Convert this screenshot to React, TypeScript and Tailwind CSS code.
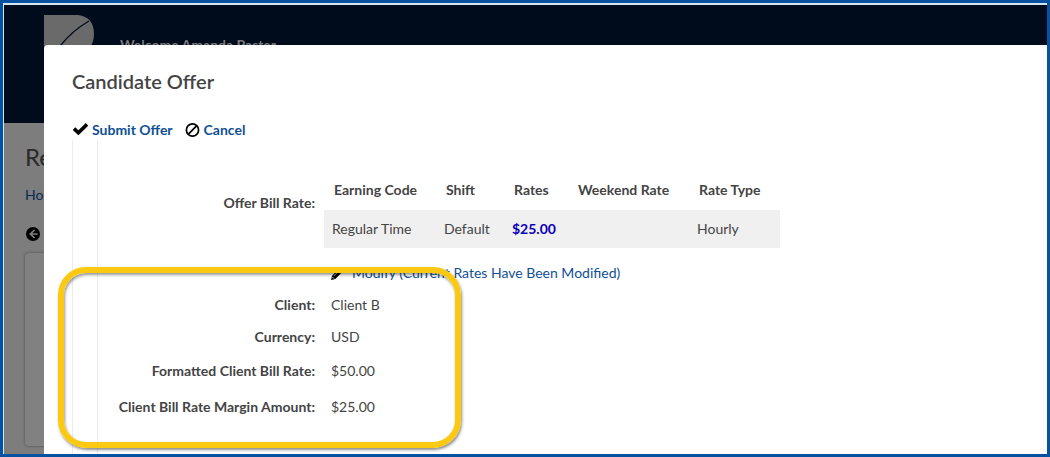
import React from "react";

type Rate = { code: string; shift: string; rate: string; weekend: string; type: string };
type Detail = { label: string; value: string; height: string };

const rates: Rate[] = [
  { code: "Regular Time", shift: "Default", rate: "$25.00", weekend: "", type: "Hourly" },
];

const details: Detail[] = [
  { label: "Client:", value: "Client B", height: "h-8" },
  { label: "Currency:", value: "USD", height: "h-8" },
  { label: "Formatted Client Bill Rate:", value: "$50.00", height: "h-9" },
  { label: "Client Bill Rate Margin Amount:", value: "$25.00", height: "h-9" },
];

function CheckIcon() {
  return (
    <svg viewBox="0 0 16 14" className="h-[14px] w-4" aria-hidden="true">
      <path d="M2 5.6 6.4 9.8 15 1.4" fill="none" stroke="#000" strokeWidth="3.6" />
    </svg>
  );
}

function BanIcon() {
  return (
    <svg viewBox="0 0 15 15" className="h-[15px] w-[15px]" fill="none" stroke="#000" strokeWidth="1.7" aria-hidden="true">
      <circle cx="7.5" cy="7" r="6.1" />
      <path d="M3.2 11.3 11.8 2.7" />
    </svg>
  );
}

function PencilIcon() {
  return (
    <svg viewBox="0 0 12 12" className="h-[13px] w-[13px]" aria-hidden="true">
      <path d="M0 12 1 8 7.8 1.2Q9 0 10.2 1.2L10.8 1.8Q12 3 10.8 4.2L4 11Z" />
      <path d="M2.6 8.2 8 2.8M1.2 9.2 2.8 10.8" stroke="#fff" strokeWidth=".7" />
    </svg>
  );
}

function BackIcon() {
  return (
    <svg viewBox="0 0 14 14" className="h-[14px] w-[14px]" aria-hidden="true">
      <circle cx="7" cy="7" r="7" />
      <path d="M8.6 3 4.4 7l4.2 4M5 7H11.6" fill="none" stroke="#7d7d7d" strokeWidth="1.7" />
    </svg>
  );
}

function Logo() {
  return (
    <svg viewBox="0 0 50 60" className="h-[60px] w-[50px]" aria-hidden="true">
      <path d="M0 0H34Q50 2 50 19Q50 36 30 45L0 60Z" fill="#6a6a6a" />
      <path d="M45 6Q28 16 17 30L10 42" fill="none" stroke="#000c1e" strokeWidth="1.3" />
    </svg>
  );
}

function Backdrop() {
  return (
    <div className="col-start-1 row-start-1 flex min-w-0 flex-col bg-[#7d7d7d]">
      <header className="flex h-[118px] items-start gap-[26px] bg-[#000c1c] pt-[10px] pl-10">
        <Logo />
        <p className="pt-5 text-sm font-bold text-[#7a7a7a]">Welcome Amanda Paster</p>
      </header>
      <div className="flex flex-1 flex-col items-start pt-5 pb-2 pl-[21px]">
        <h1 className="text-2xl leading-7 text-[#292929]">Re</h1>
        <a href="#home" className="mt-3 text-sm leading-6 text-[#0b2a52]">Home</a>
        <button type="button" aria-label="Back" className="mt-5 ml-px">
          <BackIcon />
        </button>
        <div className="mt-3 w-full flex-1 rounded-sm bg-[#818181] shadow-[0_0_3px_rgba(0,0,0,0.4)]" />
      </div>
    </div>
  );
}

function RateTable() {
  return (
    <table className="w-[456px] table-fixed text-left">
      <colgroup>
        <col className="w-28" />
        <col className="w-[68px]" />
        <col className="w-16" />
        <col className="w-[121px]" />
        <col />
      </colgroup>
      <thead>
        <tr className="h-10">
          {["Earning Code", "Shift", "Rates", "Weekend Rate", "Rate Type"].map((h) => (
            <th key={h} scope="col" className="pl-[10px] font-bold whitespace-nowrap">{h}</th>
          ))}
        </tr>
      </thead>
      <tbody>
        {rates.map((r) => (
          <tr key={r.code} className="h-[38px] bg-[#f0f0f0]">
            <td className="pl-2">{r.code}</td>
            <td className="pl-2">{r.shift}</td>
            <td className="pl-2 font-bold text-[#0a00b8]">{r.rate}</td>
            <td className="pl-2">{r.weekend}</td>
            <td className="pl-2">{r.type}</td>
          </tr>
        ))}
      </tbody>
    </table>
  );
}

function OfferDialog() {
  return (
    <section
      role="dialog"
      aria-labelledby="offer-title"
      className="relative col-start-1 row-start-1 mt-10 ml-10 flex min-w-0 flex-col rounded-tl-sm bg-white pt-6 pl-7"
    >
      <h2 id="offer-title" className="text-xl leading-6 font-semibold">Candidate Offer</h2>
      <div className="mt-[27px] flex h-5 items-center gap-3 font-bold text-[#0f4f94]">
        <button type="button" className="flex items-center gap-1">
          <CheckIcon />
          Submit Offer
        </button>
        <button type="button" className="flex items-center gap-1">
          <BanIcon />
          Cancel
        </button>
      </div>
      <div className="flex-1 border-l border-[#ececec] pl-6">
        <div className="h-full border-l border-[#ececec] pt-[30px] pb-7">
          <div className="flex items-center">
            <span className="w-[217px] shrink-0 pb-3 text-right font-bold">Offer Bill Rate:</span>
            <div className="ml-[9px]">
              <RateTable />
            </div>
          </div>
          <div className="mt-[15px] mb-[6px] ml-[233px] flex h-5 items-center">
            <a href="#modify" className="flex items-center gap-2 text-[#0f4f94]">
              <PencilIcon />
              Modify (Current Rates Have Been Modified)
            </a>
          </div>
          <dl>
            {details.map((d) => (
              <div key={d.label} className={`flex items-center gap-4 ${d.height}`}>
                <dt className="w-[217px] shrink-0 text-right font-bold">{d.label}</dt>
                <dd>{d.value}</dd>
              </div>
            ))}
          </dl>
        </div>
      </div>
      <div className="pointer-events-none absolute top-[222px] bottom-[6px] left-[14px] w-[403px] rounded-[28px] border-[6px] border-[#fbc912] shadow-[1px_2px_3px_rgba(0,0,0,0.45),inset_1px_2px_3px_rgba(0,0,0,0.4)]" />
    </section>
  );
}

export default function App() {
  return (
    <div className="flex min-h-screen flex-col border-[3px] border-[#0552a0] bg-[#0552a0] font-['Lato',sans-serif] text-sm text-[#444]">
      <div className="grid flex-1 overflow-hidden border-t-2 border-l border-[#d5e6f3]">
        <Backdrop />
        <OfferDialog />
      </div>
    </div>
  );
}
